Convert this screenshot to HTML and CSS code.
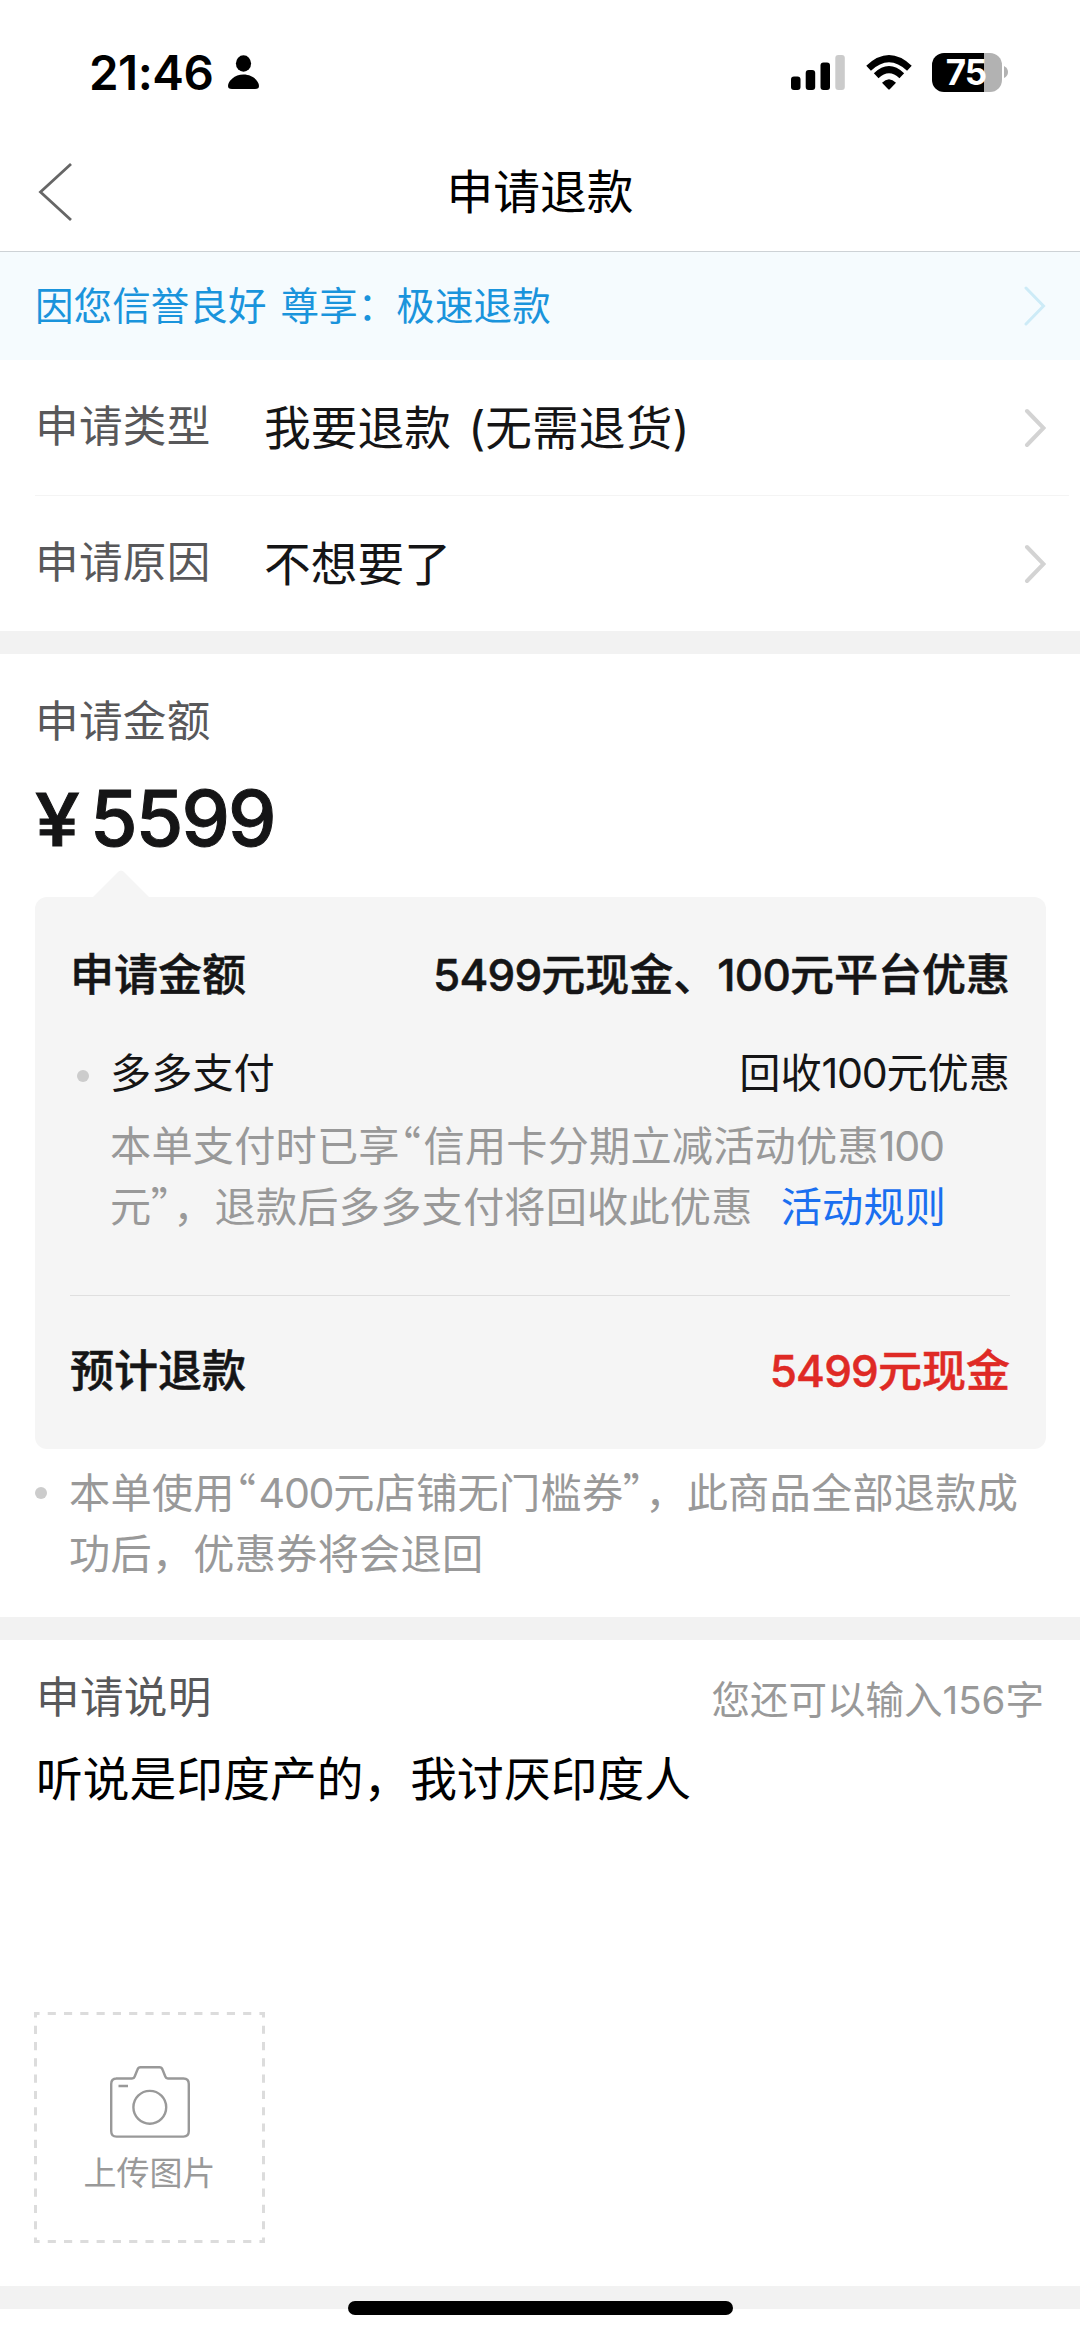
FILE: index.html
```html
<!DOCTYPE html>
<html lang="zh-CN">
<head>
<meta charset="utf-8">
<title>申请退款</title>
<link rel="stylesheet" href="styles.css">
</head>
<body>
<div class="screen">
  <div class="status">
    <span class="time">21:46</span>
    <svg class="person" viewBox="0 0 31 34"><ellipse cx="15.5" cy="8.5" rx="7.6" ry="8.3"/><path d="M4 34C1 34 0 32.800 0 31C0 26 6.500 19.500 15.500 19.500S31 26 31 31C31 32.800 30 34 27 34Z"/></svg>
    <svg class="signal" viewBox="0 0 54 35"><rect x="0" y="21.500" width="9.500" height="13.500" rx="3"/><rect x="14.700" y="15" width="9.500" height="20" rx="3"/><rect x="29.500" y="7.500" width="9.500" height="27.500" rx="3"/><rect class="off" x="44.300" y="0" width="9.500" height="35" rx="3"/></svg>
    <svg class="wifi" viewBox="0 0 46 35"><path d="M2.600 13.200Q23-6 43.400 13.200" fill="none" stroke="#000" stroke-width="6.800"/><path d="M10.200 20.800Q23 8.600 35.800 20.800" fill="none" stroke="#000" stroke-width="6.800"/><path d="M16 27.800Q23 20.800 30 27.800L24 34Q23 35 22 34Z"/></svg>
    <div class="battery"><div class="cell">75</div><svg class="nub" viewBox="0 0 4 12"><path d="M0 0Q4 2 4 6T0 12Z"/></svg></div>
  </div>
  <header class="nav">
    <svg class="back" viewBox="0 0 36 62"><path d="M34 3L3.500 31L34 59"/></svg>
    <h1>申请退款</h1>
  </header>
  <div class="banner">
    <span>因您信誉良好 尊享：极速退款</span>
    <svg class="chevron" viewBox="0 0 22 40"><path d="M2 2L19.500 20L2 38"/></svg>
  </div>
  <div class="row split">
    <span class="label">申请类型</span><span class="value">我要退款<span class="open">(</span>无需退货)</span>
    <svg class="chevron" viewBox="0 0 22 40"><path d="M3 3L19.500 20L3 37"/></svg>
  </div>
  <div class="row">
    <span class="label">申请原因</span><span class="value">不想要了</span>
    <svg class="chevron" viewBox="0 0 22 40"><path d="M3 3L19.500 20L3 37"/></svg>
  </div>
  <div class="band"></div>
  <section class="amount">
    <h2 class="label">申请金额</h2>
    <div class="price"><span class="yen">¥</span><span>5599</span></div>
    <svg class="pointer" viewBox="0 0 58 28"><path d="M0 28L26 2Q29 -1 32 2L58 28Z"/></svg>
    <div class="card">
      <div class="line strong"><span>申请金额</span><span><span class="num">5499</span>元现金、<span class="num">100</span>元平台优惠</span></div>
      <div class="line pay"><i class="dot"></i><span class="name">多多支付</span><span>回收<span class="num">100</span>元优惠</span></div>
      <p class="detail">本单支付时已享<span class="q">“</span>信用卡分期立减活动优惠<span class="num">100</span><br>元<span class="q end">”</span>，退款后多多支付将回收此优惠<a class="link">活动规则</a></p>
      <div class="line strong total"><span>预计退款</span><span class="red"><span class="num">5499</span>元现金</span></div>
    </div>
    <div class="note"><i class="dot"></i><p>本单使用<span class="q">“</span><span class="num">400</span>元店铺无门槛券<span class="q end">”</span>，此商品全部退款成<br>功后，优惠券将会退回</p></div>
  </section>
  <div class="band"></div>
  <section class="explain">
    <div class="head"><h2 class="label">申请说明</h2><span class="count">您还可以输入156字</span></div>
    <div class="input">听说是印度产的，我讨厌印度人</div>
    <div class="upload">
      <svg class="frame" viewBox="0 0 231 231"><rect x="1.500" y="1.500" width="228" height="228"/></svg>
      <svg class="camera" viewBox="0 0 80 72"><path d="M6 12.500H22Q24 12.500 24.700 10.500L27.500 3.500Q28.300 1.200 30.500 1.200H49.500Q51.700 1.200 52.500 3.500L55.300 10.500Q56 12.500 58 12.500H73.500Q78.800 12.500 78.800 18V65Q78.800 70.600 73.500 70.600H6.500Q1.200 70.600 1.200 65V18Q1.200 12.500 6.500 12.500M8.500 20H18"/><circle cx="39.800" cy="41.300" r="16.400"/></svg>
      <span>上传图片</span>
    </div>
  </section>
  <div class="band"></div>
  <div class="home"></div>
</div>
</body>
</html>
```
FILE: styles.css
```css
* { box-sizing: border-box; margin: 0; padding: 0; }
body {
  background: #fff;
  color: #151516;
  font-family: Inter, "Noto Sans CJK SC", sans-serif;
  font-size: 41.2px;
}
.screen { position: relative; width: 1080px; height: 2337px; overflow: hidden; display: flex; flex-direction: column; }
.screen > * { flex-shrink: 0; }
svg { display: block; flex: none; }

.status { height: 144px; display: flex; align-items: center; padding: 0 72px 0 89px; color: #000; }
.time { font-size: 47.5px; font-weight: 600; letter-spacing: -0.5px; width: 139px; white-space: nowrap; }
.person { width: 31px; height: 34px; }
.signal { width: 54px; height: 35px; margin-left: auto; }
.signal .off { fill: #cbcbcb; }
.wifi { width: 46px; height: 35px; margin-left: 21px; }
.battery { display: flex; align-items: center; margin-left: 20px; }
.cell {
  width: 70px; height: 39px; border-radius: 12px; color: #fff;
  background: linear-gradient(to right, #000 52px, #b2b2b2 52px);
  font-size: 35px; font-weight: 700; line-height: 39px; text-align: center; letter-spacing: -1px; padding-right: 2px;
}
.nub { width: 4px; height: 12px; margin-left: 2px; fill: #b2b2b2; }

.nav { height: 108px; display: flex; align-items: center; padding: 0 37px 11px; border-bottom: 1px solid #cdd2d6; color: #000; }
.nav h1 { flex: 1; margin-right: 36px; text-align: center; font-size: 46.7px; font-weight: 400; line-height: 60px; }
.back { width: 36px; height: 62px; fill: none; stroke: #666; stroke-width: 2.8; }

.chevron { width: 22px; height: 40px; margin-left: auto; fill: none; stroke: #d3d3d3; stroke-width: 4; stroke-linecap: round; }
.banner { height: 108px; display: flex; align-items: center; padding: 0 34px 0 35px; background: #f5fbfe; color: #1a94dc; font-size: 38.5px; line-height: 54px; letter-spacing: 0.1px; word-spacing: 3px; }
.banner .chevron { stroke: #cdebf7; stroke-width: 3; }

.row { height: 135px; display: flex; align-items: center; margin: 0 11px 0 35px; padding-right: 23px; }
.split { height: 136px; border-bottom: 1px solid #f4f4f4; }
.label { font-size: 43.6px; font-weight: 400; line-height: 60px; letter-spacing: 0.3px; color: #58585a; }
.row .label { width: 229px; padding-bottom: 2px; }
.value { font-size: 46.7px; line-height: 60px; letter-spacing: 0.1px; }
.open { margin-left: 17px; }
.band { height: 23px; background: #f2f2f2; }

.amount { height: 963px; padding: 38px 34px 0 35px; }
.price { display: flex; align-items: baseline; margin-top: 26px; height: 80px; font-size: 77px; font-weight: 500; line-height: 80px; letter-spacing: -1.9px; -webkit-text-stroke: 1px currentColor; }
.yen { width: 55px; font-size: 73px; transform: scaleX(1.1); transform-origin: left; }
.pointer { width: 58px; height: 28px; margin: 12px 0 -1px 57px; fill: #f5f5f5; }
.card { height: 552px; padding: 48px 36px 0 35px; border-radius: 12px; background: #f5f5f5; }
.line { display: flex; justify-content: space-between; align-items: center; height: 60px; line-height: 60px; }
.num { letter-spacing: -1.3px; }
.strong { font-size: 44px; font-weight: 500; -webkit-text-stroke: 0.5px currentColor; }
.strong .num { letter-spacing: -0.8px; }
.pay { margin-top: 38px; }
.dot { width: 12px; height: 12px; border-radius: 50%; background: #ccc; flex: none; }
.pay .dot { margin: 6px 21px 0 7px; }
.name { flex: 1; }
.detail { margin-top: 13px; padding-left: 40px; line-height: 61px; letter-spacing: 0.2px; color: #999; white-space: nowrap; }
.q { font-family: "Noto Sans CJK SC", sans-serif; font-feature-settings: "palt"; line-height: 1; margin-right: 3px; }
.end { margin-right: 1px; }
.link { margin-left: 28px; color: #1a6ff0; }
.total { height: 151px; margin-top: 57px; border-top: 1px solid #dfdfdf; }
.red { color: #df2a25; }
.note { display: flex; padding-top: 14px; line-height: 61px; letter-spacing: 0.25px; color: #999; white-space: nowrap; }
.note .dot { margin: 24px 22px 0 0; }

.explain { height: 646px; padding: 27px 36px 0; }
.head { display: flex; justify-content: space-between; align-items: center; height: 60px; }
.head .label { padding-top: 1px; }
.count { font-size: 38.5px; line-height: 60px; color: #999; padding-top: 5px; }
.input { margin-top: 22px; height: 263px; font-size: 46.7px; line-height: 60px; letter-spacing: 0.1px; color: #000; }
.upload { position: relative; width: 231px; height: 231px; margin-left: -2px; display: flex; flex-direction: column; align-items: center; padding-top: 54px; font-size: 33px; line-height: 44px; color: #999; }
.frame { position: absolute; inset: 0; width: 231px; height: 231px; fill: none; stroke: #dcdcdc; stroke-width: 3; stroke-dasharray: 8.14 8.145; stroke-dashoffset: 4.07; }
.camera { width: 80px; height: 72px; margin-bottom: 13px; fill: none; stroke: #999; stroke-width: 2.4; }
.home { position: absolute; left: 348px; top: 2301px; width: 385px; height: 14px; border-radius: 7px; background: #000; }
```
